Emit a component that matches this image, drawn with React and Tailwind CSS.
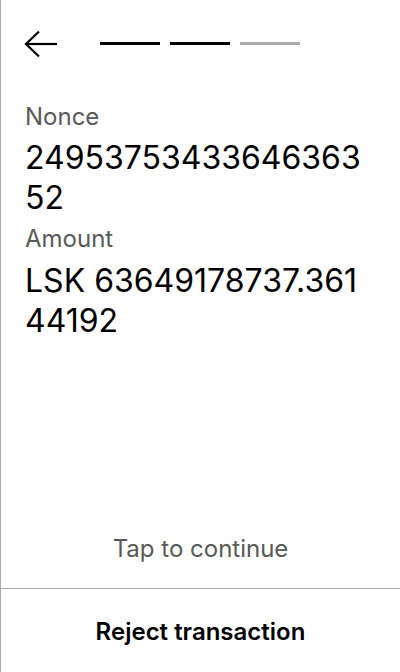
export default function App() {
  return (
    <div
      className="w-[400px] h-[672px] flex flex-col bg-white border-l border-[#aaaaaa] text-black"
      style={{ fontFamily: 'Inter, "Noto Sans", sans-serif' }}
    >
      <div className="flex items-center pl-[23px] pt-[29px] h-[58px]">
        <svg width="34" height="28" viewBox="0 0 34 28" fill="none" stroke="black" strokeWidth="2.2">
          <path d="M33 14H2" />
          <path d="M15 1.5L2 14l13 12.5" />
        </svg>
        <div className="flex gap-[10px] ml-[42px]">
          <div className="w-[60px] h-[3px] bg-black" />
          <div className="w-[60px] h-[3px] bg-black" />
          <div className="w-[60px] h-[3px] bg-[#aaaaaa]" />
        </div>
      </div>

      <div className="px-6 pt-[44px] flex flex-col">
        <p className="text-[24px] leading-[30px] text-[#595959]">Nonce</p>
        <p className="text-[32px] leading-[40px] mt-[6px] break-all">2495375343364636352</p>
        <p className="text-[24px] leading-[30px] text-[#595959] mt-[6px]">Amount</p>
        <p className="text-[32px] leading-[40px] mt-[7px] break-all">LSK 63649178737.36144192</p>
      </div>

      <div className="flex-1" />

      <p className="text-center text-[24px] leading-[30px] text-[#595959] pb-[24px]">Tap to continue</p>

      <button className="h-[84px] pt-[3px] border-t border-[#aaaaaa] text-[24px] leading-[30px] font-semibold text-black">
        Reject transaction
      </button>
    </div>
  )
}
